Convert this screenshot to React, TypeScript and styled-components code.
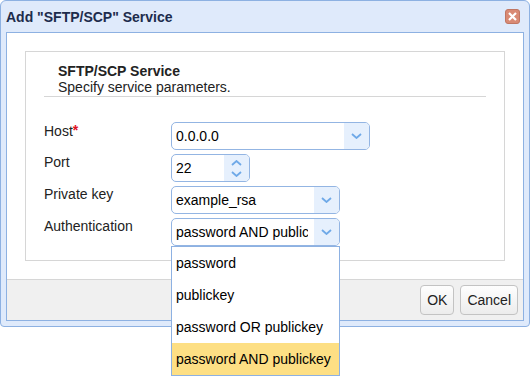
import styled, { createGlobalStyle } from "styled-components";

const GlobalStyle = createGlobalStyle`
  body {
    margin: 0;
    background: #fff;
    font-family: "Liberation Sans", Arial, sans-serif;
  }
`;

const Page = styled.div`
  width: 530px;
  height: 390px;
`;
const Window = styled.div`
  box-sizing: border-box;
  width: 530px;
  border: 1px solid #8db1e2;
  border-radius: 6px 6px 4px 4px;
  background: #dfeafb;
  padding: 0 5px 5px;
`;
const TitleBar = styled.div`
  height: 31px;
  display: flex;
  align-items: center;
  justify-content: space-between;
`;
const Title = styled.h1`
  margin: 0;
  font-size: 14px;
  font-weight: bold;
  color: #1d2c4c;
`;
const CloseButton = styled.div`
  box-sizing: border-box;
  width: 15px;
  height: 15px;
  margin-right: 4px;
  border: 1px solid #c07662;
  border-radius: 3px;
  background: #d98a74;
  display: flex;
  align-items: center;
  justify-content: center;
`;
const Panel = styled.div`
  border: 1px solid #8db1e2;
  background: #fff;
`;
const Content = styled.div`
  padding: 18px;
`;
const Box = styled.div`
  border: 1px solid #d6d6d6;
  padding: 11px 18px 14px;
`;
const Header = styled.div`
  padding: 0 14px 1px;
  border-bottom: 1px solid #d6d6d6;
  color: #222;
  font-size: 14px;
  line-height: 16px;
`;
const HeaderTitle = styled.div`
  font-weight: bold;
`;
const Form = styled.div`
  margin-top: 25px;
  display: grid;
  grid-template-columns: 127px auto;
  row-gap: 4px;
  align-items: start;
`;
const Label = styled.label`
  font-size: 14px;
  line-height: 16px;
  color: #222;
`;
const Required = styled.span`
  color: #e0101e;
  font-weight: bold;
  vertical-align: 1px;
`;
const Field = styled.div<{ $width: number }>`
  position: relative;
  box-sizing: border-box;
  width: ${(p) => p.$width}px;
  height: 28px;
  border: 1px solid #93b5e3;
  border-radius: 5px;
  display: flex;
  font-size: 14px;
  color: #000;
`;
const Value = styled.span`
  flex: 1;
  min-width: 0;
  margin-right: 6px;
  padding-left: 4px;
  line-height: 26px;
  white-space: nowrap;
  overflow: hidden;
`;
const ArrowBox = styled.span`
  flex: none;
  width: 25px;
  background: #e6f0fd;
  border-radius: 0 4px 4px 0;
  display: flex;
  flex-direction: column;
  align-items: center;
  justify-content: center;
  gap: 5px;
`;
const List = styled.ul`
  position: absolute;
  top: 100%;
  left: -1px;
  right: -1px;
  margin: 1px 0 0;
  padding: 0;
  list-style: none;
  border: 1px solid #8db1e2;
  background: #fff;
  z-index: 2;
`;
const Option = styled.li<{ $active?: boolean }>`
  height: 32px;
  line-height: 32px;
  padding-left: 4px;
  font-size: 14px;
  color: #000;
  background: ${(p) => (p.$active ? "#fddf84" : "#fff")};
`;
const Footer = styled.div`
  border-top: 1px solid #d6d6d6;
  background: #f0f0f0;
  padding: 5px;
  display: flex;
  justify-content: flex-end;
  gap: 6px;
`;
const Button = styled.button`
  box-sizing: border-box;
  height: 30px;
  padding: 0 6px;
  border: 1px solid #c3c3c3;
  border-radius: 4px;
  background: linear-gradient(#fefefe, #ececec);
  font-family: "Liberation Sans", Arial, sans-serif;
  font-size: 14px;
  color: #222;
`;

function Chevron({ up }: { up?: boolean }) {
  return (
    <svg width="11" height="6" viewBox="0 0 11 6">
      <polyline
        points={up ? "1,5 5.5,1 10,5" : "1,1 5.5,5 10,1"}
        fill="none"
        stroke="#6fa9e8"
        strokeWidth="1.8"
      />
    </svg>
  );
}

function Select({ value, width }: { value: string; width: number }) {
  return (
    <Field $width={width}>
      <Value>{value}</Value>
      <ArrowBox>
        <Chevron />
      </ArrowBox>
    </Field>
  );
}

const authOptions = [
  "password",
  "publickey",
  "password OR publickey",
  "password AND publickey",
];

function App() {
  return (
    <Page>
      <GlobalStyle />
      <Window>
        <TitleBar>
          <Title>Add "SFTP/SCP" Service</Title>
          <CloseButton>
            <svg width="9" height="9" viewBox="0 0 9 9">
              <path d="M1 1 L8 8 M8 1 L1 8" stroke="#fff" strokeWidth="2.2" />
            </svg>
          </CloseButton>
        </TitleBar>
        <Panel>
          <Content>
            <Box>
              <Header>
                <HeaderTitle>SFTP/SCP Service</HeaderTitle>
                <div>Specify service parameters.</div>
              </Header>
              <Form>
                <Label>
                  Host<Required>*</Required>
                </Label>
                <Select value="0.0.0.0" width={199} />
                <Label>Port</Label>
                <Field $width={79}>
                  <Value>22</Value>
                  <ArrowBox>
                    <Chevron up />
                    <Chevron />
                  </ArrowBox>
                </Field>
                <Label>Private key</Label>
                <Select value="example_rsa" width={169} />
                <Label>Authentication</Label>
                <Field $width={169}>
                  <Value>password AND publickey</Value>
                  <ArrowBox>
                    <Chevron />
                  </ArrowBox>
                  <List>
                    {authOptions.map((opt, i) => (
                      <Option key={opt} $active={i === authOptions.length - 1}>
                        {opt}
                      </Option>
                    ))}
                  </List>
                </Field>
              </Form>
            </Box>
          </Content>
          <Footer>
            <Button>OK</Button>
            <Button>Cancel</Button>
          </Footer>
        </Panel>
      </Window>
    </Page>
  );
}
export default App;
